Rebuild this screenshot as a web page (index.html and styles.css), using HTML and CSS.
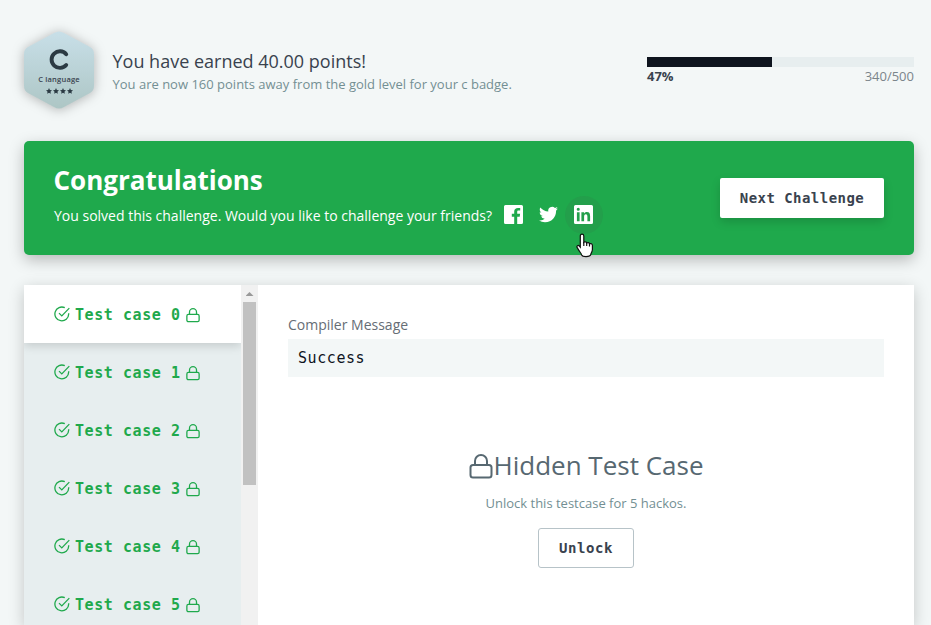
FILE: index.html
```html
<!DOCTYPE html>
<html lang="en">
<head>
<meta charset="utf-8">
<title>Challenge result</title>
<link rel="stylesheet" href="styles.css">
</head>
<body>
<svg class="defs" width="0" height="0" aria-hidden="true">
  <symbol id="check" viewBox="0 0 16 16"><path d="M14.7 7.2v.8A6.9 6.9 0 1 1 10.8 1.7M5 7.1l2.8 2.8 7.5-7.8"/></symbol>
  <symbol id="lock" viewBox="0 0 24 26"><rect x="1.5" y="12" width="21" height="12.5" rx="2.5"/><path d="M6 12V8a6 6 0 0 1 12 0v4"/></symbol>
  <symbol id="star" viewBox="0 0 10 10"><path d="M5 0l1.5 3.3 3.5.4-2.6 2.4.7 3.5L5 7.8 1.9 9.6l.7-3.5L0 3.7l3.5-.4z"/></symbol>
</svg>
<header class="summary">
  <div class="badge">
    <svg class="badge-shape" viewBox="0 0 72 80">
      <defs><linearGradient id="silver" x1="0" y1="0" x2="0" y2="1"><stop offset="0" stop-color="#c8dfe8"/><stop offset="1" stop-color="#adc6c5"/></linearGradient></defs>
      <path fill="url(#silver)" d="M31 3Q36 0 41 3L67 17Q71 19 71 24V56Q71 61 67 63L41 77Q36 80 31 77L5 63Q1 61 1 56V24Q1 19 5 17Z"/>
      <path class="badge-c" d="M43.2 24.2A8.3 8.3 0 1 0 43.2 35"/>
    </svg>
    <div class="badge-label">
      <span class="badge-name">C language</span>
      <div class="stars"><svg><use href="#star"/></svg><svg><use href="#star"/></svg><svg><use href="#star"/></svg><svg><use href="#star"/></svg></div>
    </div>
  </div>
  <div class="earned">
    <h1>You have earned 40.00 points!</h1>
    <p>You are now 160 points away from the gold level for your c badge.</p>
  </div>
  <div class="progress">
    <div class="track"><div class="fill" style="width:47%"></div></div>
    <div class="values"><b>47%</b><span>340/500</span></div>
  </div>
</header>
<section class="banner">
  <div class="banner-text">
    <h2>Congratulations</h2>
    <div class="share">
      <span>You solved this challenge. Would you like to challenge your friends?</span>
      <a class="social"><svg viewBox="0 0 19 19"><path fill-rule="evenodd" d="M1.5 0h16Q19 0 19 1.5v16q0 1.500-1.500 1.500H13.200v-7.300h2.500l.4-2.900h-2.900V7c0-.9.3-1.400 1.500-1.400h1.500V3.100l-2.200-.1c-2.300 0-3.800 1.300-3.800 3.700v2.100H7.800v2.900h2.400V19H1.500Q0 19 0 17.500v-16Q0 0 1.500 0z"/></svg></a>
      <a class="social"><svg viewBox="0 0 24 24"><path d="M23.950 4.570a10 10 0 0 1-2.820.77 4.960 4.960 0 0 0 2.160-2.720c-.95.550-2 .95-3.130 1.180a4.920 4.920 0 0 0-8.380 4.480C7.690 8.090 4.070 6.130 1.640 3.160a4.820 4.820 0 0 0-.67 2.480c0 1.710.87 3.210 2.190 4.100a4.900 4.900 0 0 1-2.230-.62v.06a4.920 4.920 0 0 0 3.950 4.830 5 5 0 0 1-2.210.08 4.940 4.940 0 0 0 4.600 3.420A9.870 9.870 0 0 1 0 19.540a13.990 13.990 0 0 0 7.550 2.210c9.050 0 14-7.500 14-13.980l-.02-.64a9.940 9.940 0 0 0 2.420-2.560z"/></svg></a>
      <a class="social active"><svg viewBox="0 0 19 19"><path fill-rule="evenodd" d="M1.500 0h16Q19 0 19 1.500v16q0 1.500-1.500 1.500h-16Q0 19 0 17.500v-16Q0 0 1.500 0zM2.900 7.200v9h2.700v-9zM4.250 2.700a1.550 1.550 0 1 0 0 3.100 1.550 1.550 0 0 0 0-3.100zM7.400 7.200v9h2.700v-4.600c0-1.300.4-2.300 1.700-2.300s1.600 1 1.600 2.300v4.600h2.700v-5.100c0-2.700-.7-4.200-3.200-4.200-1.400 0-2.300.7-2.700 1.500h-.1V7.200z"/></svg>
        <svg class="cursor" viewBox="0 0 18 25"><path d="M6 1.200c1.200 0 1.800.8 1.800 1.800v6.300c.8-.9 2.700-.6 2.900.7.900-.8 2.500-.4 2.800.8 1.300-.7 2.900.1 2.900 1.700v4c0 2.200-1.400 3.200-1.700 5.200-.2 1.300-1.700 1.900-4.700 1.900-2.600 0-3.900-.5-4.300-1.600-.6-1.900-2-3.100-3-4.900l-1.600-2.700c-.7-1.300.9-2.600 2.200-1.400l1 1.100V3c0-1 .6-1.800 1.700-1.800z"/><path d="M7.800 9v4M10.700 10v3M13.500 11v2.500"/></svg>
      </a>
    </div>
  </div>
  <button class="next">Next Challenge</button>
</section>
<main class="results">
  <nav class="cases">
    <div class="case selected"><svg class="check"><use href="#check"/></svg><span>Test case 0</span><svg class="lock"><use href="#lock"/></svg></div>
    <div class="case"><svg class="check"><use href="#check"/></svg><span>Test case 1</span><svg class="lock"><use href="#lock"/></svg></div>
    <div class="case"><svg class="check"><use href="#check"/></svg><span>Test case 2</span><svg class="lock"><use href="#lock"/></svg></div>
    <div class="case"><svg class="check"><use href="#check"/></svg><span>Test case 3</span><svg class="lock"><use href="#lock"/></svg></div>
    <div class="case"><svg class="check"><use href="#check"/></svg><span>Test case 4</span><svg class="lock"><use href="#lock"/></svg></div>
    <div class="case"><svg class="check"><use href="#check"/></svg><span>Test case 5</span><svg class="lock"><use href="#lock"/></svg></div>
  </nav>
  <div class="scrollbar"><i class="arrow"></i><i class="thumb"></i></div>
  <section class="detail">
    <h3>Compiler Message</h3>
    <pre>Success</pre>
    <div class="hidden-case">
      <h4><svg><use href="#lock"/></svg><span>Hidden Test Case</span></h4>
      <p>Unlock this testcase for 5 hackos.</p>
      <button class="unlock">Unlock</button>
    </div>
  </section>
</main>
</body>
</html>
```
FILE: styles.css
```css
* { box-sizing: border-box; }
body {
  margin: 0;
  height: 625px;
  overflow: hidden;
  padding: 30px 17px 0 24px;
  background: #f3f7f7;
  font-family: "Open Sans", sans-serif;
  color: #39424e;
}
h1, h2, h3, h4, p, pre { margin: 0; font-weight: 400; }
svg { display: block; flex: none; }
.defs { position: absolute; }

.summary { display: flex; height: 111px; }
.badge { position: relative; width: 70px; height: 80px; margin-right: 18.5px; }
.badge-shape { width: 72px; height: 80px; margin-left: -1px; filter: drop-shadow(0 1px 6px rgba(0, 0, 0, .28)); }
.badge-c { fill: none; stroke: #2b3a43; stroke-width: 3.9; stroke-linecap: round; }
.badge-label { position: absolute; top: 44px; left: 0; width: 70px; text-align: center; }
.badge-name { display: block; font-size: 7.5px; line-height: 11px; font-weight: 600; letter-spacing: .2px; white-space: nowrap; }
.stars { display: flex; justify-content: center; gap: 1px; margin-top: 3px; }
.stars svg { width: 6px; height: 6px; fill: #2b3a43; }
.earned { flex: 1; padding-top: 19px; }
.earned h1 { font-size: 18px; line-height: 25px; }
.earned p { font-size: 13px; line-height: 20px; color: #738f93; }
.progress { width: 267px; padding-top: 27px; }
.track { height: 10px; background: #e7eeef; }
.fill { height: 10px; background: #0e141e; }
.values { display: flex; justify-content: space-between; font-size: 13px; line-height: 18px; color: #7b858b; }
.values b { color: #39424e; }

.banner {
  display: flex;
  justify-content: space-between;
  align-items: center;
  height: 114px;
  padding: 0 30px;
  border-radius: 5px;
  background: #1fa94c;
  color: #fff;
  box-shadow: 0 5px 15px rgba(0, 0, 0, .25);
}
.banner-text { padding-bottom: 2px; }
.banner h2 { font-size: 26px; line-height: 36px; font-weight: 700; margin-left: -.5px; }
.share { display: flex; align-items: center; height: 34px; font-size: 14px; }
.social { position: relative; display: grid; place-items: center; width: 35px; height: 38px; }
.share span { margin-right: 4px; }
.social > svg:first-child { width: 19px; height: 19px; margin-top: -1px; fill: #fff; }
.social.active { width: 38px; border-radius: 50%; background: #239f4b; margin-left: -1.5px; }
.social .cursor { position: absolute; left: 11px; top: 37px; width: 18px; height: 25px; fill: #fff; stroke: #111; stroke-width: 1.200; }
button { height: 40px; font: bold 14px "DejaVu Sans Mono", monospace; color: #39424e; background: #fff; border: 0; border-radius: 3px; padding: 0; }
.next { width: 164px; letter-spacing: .45px; border-radius: 2px; box-shadow: 0 4px 10px rgba(0, 0, 0, .15); }

.results { display: flex; height: 340px; margin-top: 30px; background: #fff; box-shadow: 0 4px 15px rgba(0, 0, 0, .2); }
.cases { width: 217px; height: 340px; overflow: hidden; background: #e7eeef; }
.case { display: flex; align-items: center; height: 58px; padding-left: 30px; color: #1fa94c; font: bold 15px "DejaVu Sans Mono", monospace; letter-spacing: .57px; }
.case:last-child { height: 50px; padding-top: 8px; }
.case span { padding-top: 1px; }
.case.selected { background: #fff; box-shadow: 0 3px 9px rgba(0, 0, 0, .15); }
.check { width: 16px; height: 16px; margin-right: 5px; fill: none; stroke: currentColor; stroke-width: 1.300; }
.case .lock { width: 14px; height: 16px; margin: 2px 0 0 5px; fill: none; stroke: currentColor; stroke-width: 2.200; }
.scrollbar { width: 17px; padding: 7px 2px; background: #f1f1f1; }
.arrow { display: block; width: 8px; height: 4px; margin: 0 auto 6px; background: #999; clip-path: polygon(50% 0, 100% 100%, 0 100%); }
.thumb { display: block; width: 13px; height: 183px; background: #c1c1c1; }
.detail { flex: 1; padding: 30px 30px 0; }
.detail h3 { font-size: 14px; line-height: 20px; color: #666d75; }
.detail pre { height: 38px; margin-top: 4px; padding-left: 10px; background: #f3f7f7; color: #0e141e; font: 15px/39px "DejaVu Sans Mono", monospace; letter-spacing: .57px; }
.hidden-case { display: flex; flex-direction: column; align-items: center; margin-top: 70px; }
.hidden-case h4 { display: flex; align-items: center; font-size: 26px; line-height: 36px; color: #576871; }
.hidden-case h4 svg { width: 24px; height: 26px; margin: 1px 1px 0 0; fill: none; stroke: currentColor; stroke-width: 2; }
.hidden-case p { margin: 10px 0 15px; font-size: 13px; line-height: 20px; color: #738f93; }
.unlock { width: 96px; border: 1px solid #b7c3c8; letter-spacing: .6px; }
```
